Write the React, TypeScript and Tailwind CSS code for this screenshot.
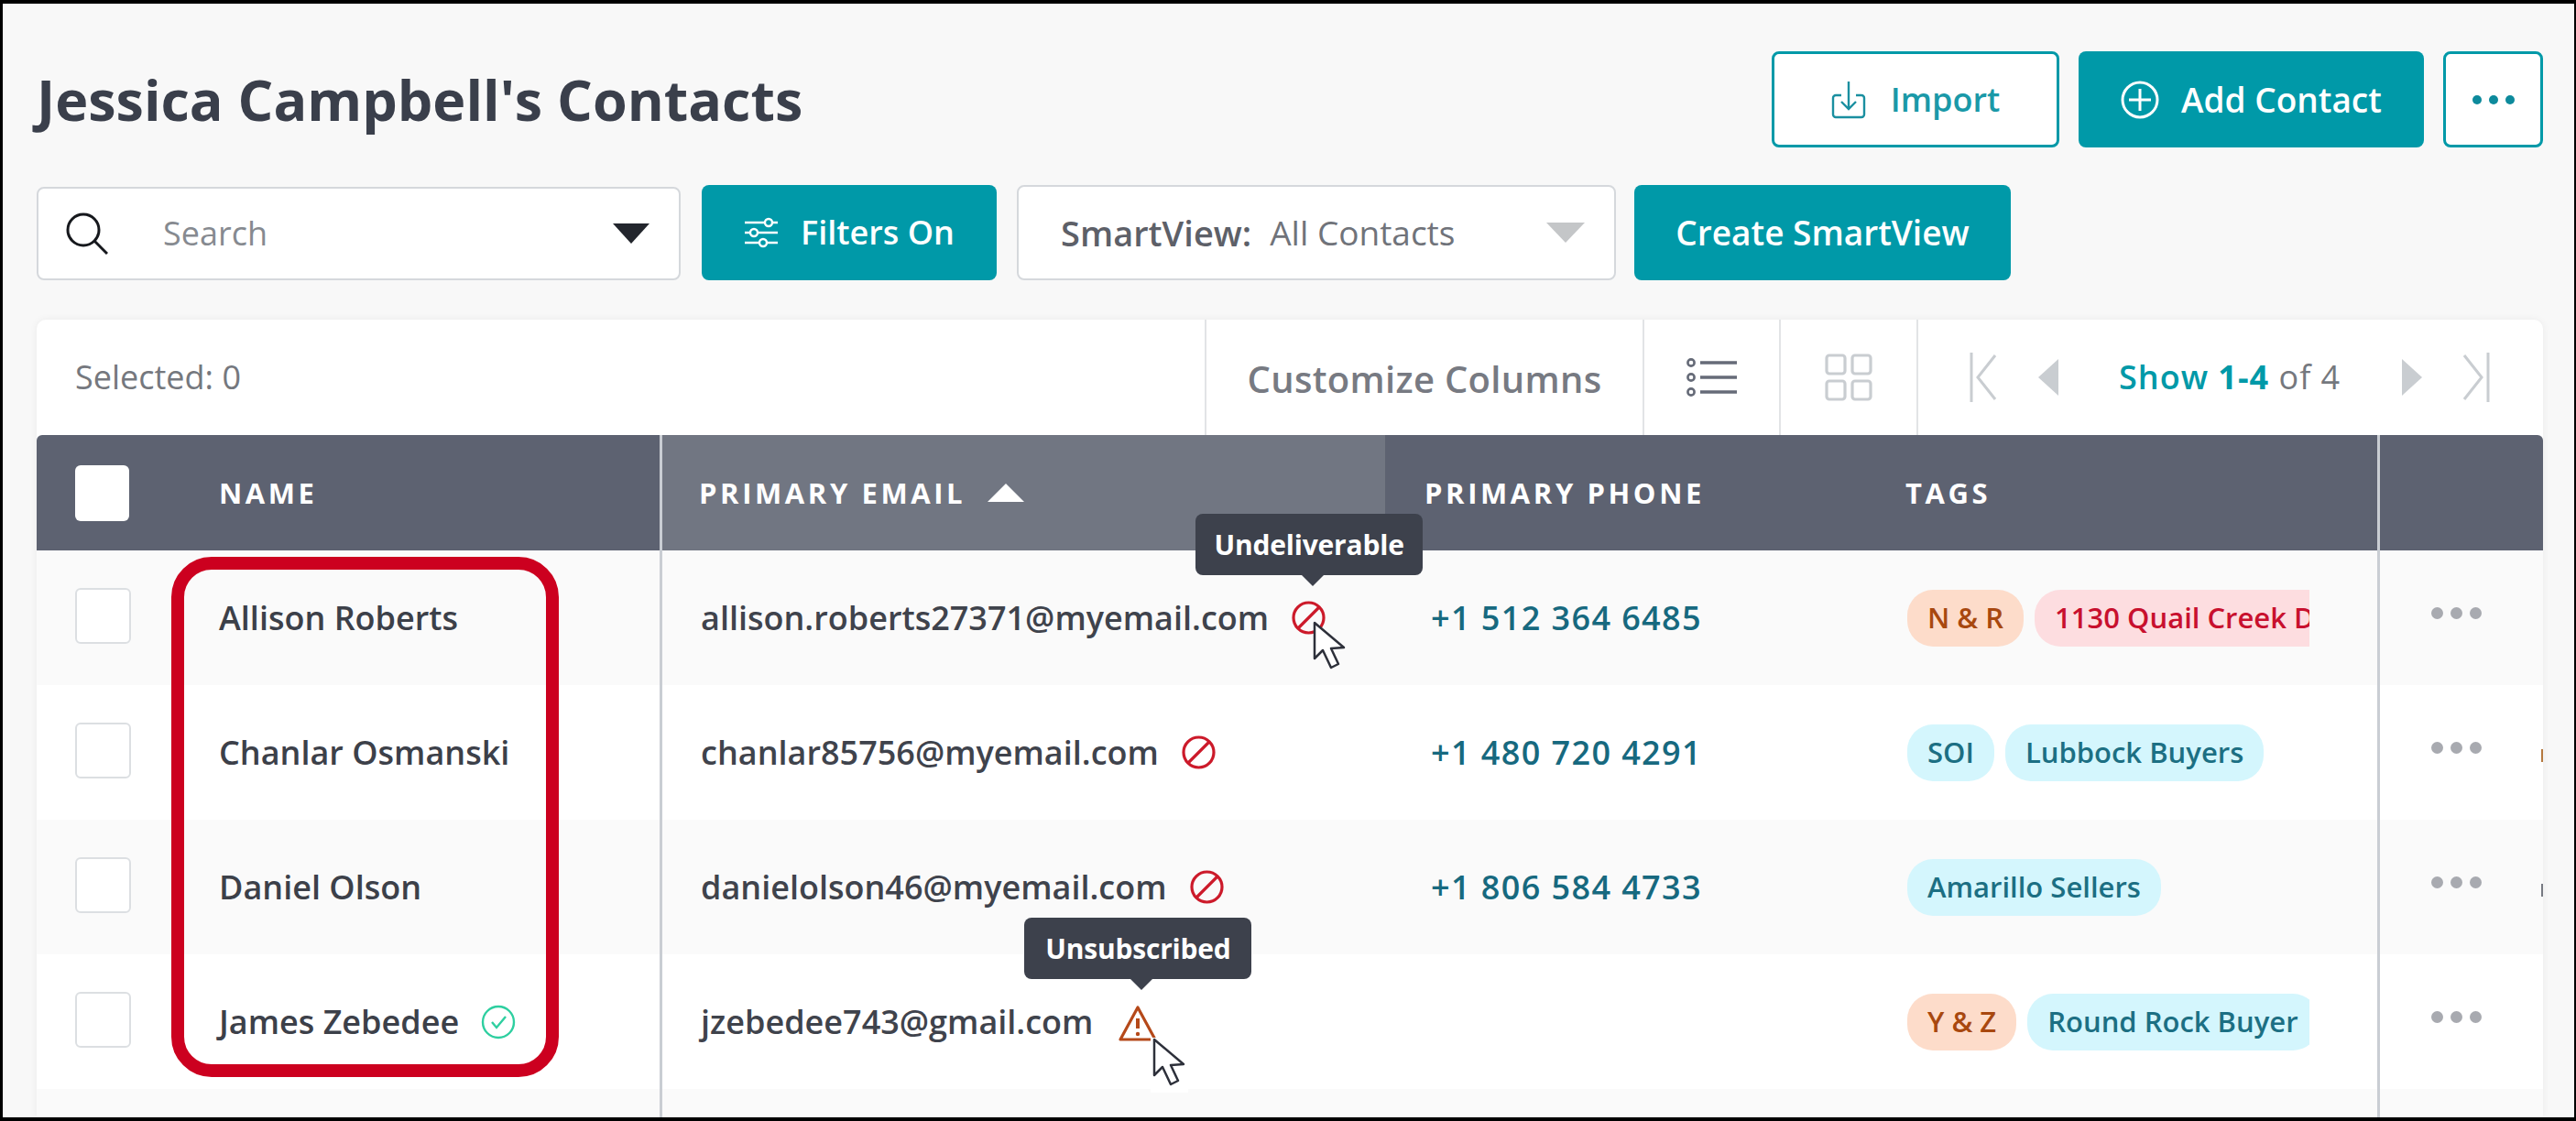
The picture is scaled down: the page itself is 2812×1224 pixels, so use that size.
import React from 'react';

const FONT = "font-['Open_Sans','Noto_Sans',sans-serif]";

const Cursor: React.FC = () => (
  <svg width="37" height="54" viewBox="0 0 37 54" className="block">
    <path
      d="M2 2 L2 41 L11 32 L20 51 L28 47 L20 30 L34 29 Z"
      fill="#fff"
      stroke="#2d303a"
      strokeWidth="2.5"
      strokeLinejoin="round"
    />
  </svg>
);

const Tooltip: React.FC<{ label: string }> = ({ label }) => (
  <div className="absolute bottom-[calc(100%+28px)] left-[-105px] w-[248px] h-[67px] rounded-[8px] bg-[#3d414c] flex items-center justify-center text-white font-bold text-[30px] tracking-[-0.2px] z-20">
    {label}
    <span className="absolute left-[116px] top-full w-0 h-0 border-x-[12px] border-x-transparent border-t-[12px] border-t-[#3d414c]" />
  </div>
);

const BlockedIcon: React.FC<{ tip?: string }> = ({ tip }) => (
  <span className="relative block w-[37px] h-[37px] shrink-0">
    <svg width="37" height="37" viewBox="0 0 37 37" className="block">
      <circle cx="18.5" cy="18.5" r="16.5" fill="none" stroke="#cc1a2a" strokeWidth="3.2" />
      <line x1="7" y1="30" x2="30" y2="7" stroke="#cc1a2a" strokeWidth="3.2" />
    </svg>
    {tip && <Tooltip label={tip} />}
    {tip && (
      <span className="absolute left-[23px] top-[22px] z-20">
        <Cursor />
      </span>
    )}
  </span>
);

const WarnIcon: React.FC<{ tip: string }> = ({ tip }) => (
  <span className="relative block w-[37px] h-[37px] ml-[5px] shrink-0">
    <svg width="44" height="41" viewBox="0 0 44 41" className="block absolute left-[-3px] top-0">
      <path d="M22 3 L41 38 L3 38 Z" fill="none" stroke="#b5491a" strokeWidth="3.2" strokeLinejoin="round" />
      <line x1="22" y1="15" x2="22" y2="26" stroke="#b5491a" strokeWidth="4" />
      <circle cx="22" cy="32" r="2.2" fill="#b5491a" />
    </svg>
    <Tooltip label={tip} />
    <span className="absolute left-[33px] top-[36px] z-20 bg-white pb-[6px] px-[2px]">
      <Cursor />
    </span>
  </span>
);

const Tag: React.FC<{ label: string; tone: 'blue' | 'orange' | 'red' }> = ({ label, tone }) => {
  const toneClass =
    tone === 'blue'
      ? 'bg-[#d4f6fd] text-[#1c6f83]'
      : tone === 'orange'
        ? 'bg-[#fddcca] text-[#a8480f]'
        : 'bg-[#fddde0] text-[#c8102e]';
  return (
    <span
      className={`h-[62px] px-[22px] rounded-[28px] flex items-center text-[31px] font-semibold whitespace-nowrap shrink-0 ${toneClass}`}
    >
      {label}
    </span>
  );
};

const Dots: React.FC<{ className: string; size: string }> = ({ className, size }) => (
  <span className="flex gap-[8px]">
    <span className={`${size} rounded-full ${className}`} />
    <span className={`${size} rounded-full ${className}`} />
    <span className={`${size} rounded-full ${className}`} />
  </span>
);

type Row = {
  name: string;
  verified?: boolean;
  email: string;
  status: React.ReactNode;
  phone?: string;
  tags: { label: string; tone: 'blue' | 'orange' | 'red' }[];
  bg: string;
  edge?: string;
};

const rows: Row[] = [
  {
    name: 'Allison Roberts',
    email: 'allison.roberts27371@myemail.com',
    status: <BlockedIcon tip="Undeliverable" />,
    phone: '+1 512 364 6485',
    tags: [
      { label: 'N & R', tone: 'orange' },
      { label: '1130 Quail Creek Drive', tone: 'red' },
    ],
    bg: 'bg-[#fafafa]',
  },
  {
    name: 'Chanlar Osmanski',
    email: 'chanlar85756@myemail.com',
    status: <BlockedIcon />,
    phone: '+1 480 720 4291',
    tags: [
      { label: 'SOI', tone: 'blue' },
      { label: 'Lubbock Buyers', tone: 'blue' },
    ],
    bg: 'bg-white',
    edge: 'bg-[#b5793f]',
  },
  {
    name: 'Daniel Olson',
    email: 'danielolson46@myemail.com',
    status: <BlockedIcon />,
    phone: '+1 806 584 4733',
    tags: [{ label: 'Amarillo Sellers', tone: 'blue' }],
    bg: 'bg-[#fafafa]',
    edge: 'bg-[#777a82]',
  },
  {
    name: 'James Zebedee',
    verified: true,
    email: 'jzebedee743@gmail.com',
    status: <WarnIcon tip="Unsubscribed" />,
    tags: [
      { label: 'Y & Z', tone: 'orange' },
      { label: 'Round Rock Buyer', tone: 'blue' },
    ],
    bg: 'bg-white',
  },
];

const COLS = 'grid grid-cols-[680px_792px_568px_515px_181px]';

export default function App() {
  return (
    <div
      className={`relative w-[2812px] h-[1224px] overflow-hidden bg-[#f8f8f8] border-black border-t-[4px] border-b-[4px] border-l-[3px] border-r-[2px] pl-[37px] pr-[34px] flex flex-col ${FONT}`}
    >
      {/* title row */}
      <div className="flex items-center justify-between pt-[52px] shrink-0">
        <h1 className="text-[61px] leading-[105px] font-bold text-[#3a3f4b]">
          Jessica Campbell's Contacts
        </h1>
        <div className="flex gap-[21px]">
          <button className="w-[314px] h-[105px] rounded-[8px] bg-white border-[3px] border-[#0099a8] flex items-center justify-center gap-[27px] text-[36px] font-semibold text-[#1a99a8]">
            <svg width="38" height="42" viewBox="0 0 38 42" fill="none" stroke="#1a8fa0" strokeWidth="2.4">
              <path d="M11 16 H5 a3 3 0 0 0 -3 3 V37 a3 3 0 0 0 3 3 H33 a3 3 0 0 0 3 -3 V19 a3 3 0 0 0 -3 -3 H27" />
              <path d="M19 1 V31 M11 23 L19 31 L27 23" />
            </svg>
            Import
          </button>
          <button className="w-[377px] h-[105px] rounded-[8px] bg-[#0099a8] flex items-center justify-center gap-[24px] text-[37px] font-semibold text-white">
            <svg width="42" height="42" viewBox="0 0 42 42" fill="none" stroke="#fff" strokeWidth="3">
              <circle cx="21" cy="21" r="19" />
              <path d="M21 9 V33 M9 21 H33" />
            </svg>
            Add Contact
          </button>
          <button className="w-[109px] h-[105px] rounded-[8px] bg-white border-[3px] border-[#0099a8] flex items-center justify-center">
            <Dots className="bg-[#0d8a9c]" size="w-[10px] h-[10px]" />
          </button>
        </div>
      </div>

      {/* filter row */}
      <div className="flex items-stretch mt-[41px] h-[104px] shrink-0">
        <div className="w-[703px] mt-[2px] rounded-[8px] bg-white border-2 border-[#d5d8dc] flex items-center pl-[30px] pr-[32px]">
          <svg width="46" height="46" viewBox="0 0 46 46" fill="none" stroke="#16181d" strokeWidth="3" className="shrink-0">
            <circle cx="19" cy="19" r="17" />
            <path d="M31 31 L45 45" />
          </svg>
          <span className="ml-[60px] flex-1 text-[36px] text-[#868a90]">Search</span>
          <span className="w-0 h-0 border-x-[20px] border-x-transparent border-t-[22px] border-t-[#23262d]" />
        </div>
        <button className="w-[322px] ml-[23px] rounded-[8px] bg-[#0099a8] flex items-center justify-center gap-[24px] text-[36px] font-semibold text-white">
          <svg width="38" height="36" viewBox="0 0 38 36" fill="none" stroke="#fff" strokeWidth="2.4">
            <path d="M1 7 H23 M31 7 H37 M1 18 H7 M15 18 H37 M1 29 H17 M25 29 H37" />
            <circle cx="27" cy="7" r="4" />
            <circle cx="11" cy="18" r="4" />
            <circle cx="21" cy="29" r="4" />
          </svg>
          Filters On
        </button>
        <div className="w-[654px] ml-[22px] rounded-[8px] bg-white border-2 border-[#d5d8dc] flex items-center pl-[46px] pr-[32px] text-[37px] whitespace-nowrap">
          <span className="font-semibold text-[#5d6068] text-[38px]">SmartView:</span>
          <span className="ml-[20px] flex-1 text-[#70737a]">All Contacts</span>
          <span className="w-0 h-0 border-x-[21px] border-x-transparent border-t-[22px] border-t-[#c4c6c8]" />
        </div>
        <button className="w-[411px] ml-[20px] rounded-[8px] bg-[#0099a8] flex items-center justify-center text-[37px] font-semibold text-white">
          Create SmartView
        </button>
      </div>

      {/* card */}
      <div className="relative mt-[43px] flex-1 rounded-t-[10px] bg-white shadow-[0_0_8px_rgba(0,0,0,0.06)]">
        <div className="flex h-[126px] items-stretch">
          <div className="w-[1275px] pl-[42px] flex items-center text-[36px] text-[#75787e]">Selected: 0</div>
          <div className="w-[478px] border-l-2 border-[#e2e4e6] flex items-center justify-center pt-[4px] text-[40px] font-semibold tracking-[0.3px] text-[#777a82] whitespace-nowrap">
            Customize Columns
          </div>
          <div className="w-[149px] border-l-2 border-[#e2e4e6] flex items-center justify-center">
            <svg width="56" height="44" viewBox="0 0 56 44" fill="none" stroke="#666b78" strokeWidth="2.6">
              <circle cx="5" cy="6" r="3.6" />
              <circle cx="5" cy="22" r="3.6" />
              <circle cx="5" cy="38" r="3.6" />
              <path strokeWidth="3.6" d="M15 6 H55 M15 22 H55 M15 38 H55" />
            </svg>
          </div>
          <div className="w-[150px] border-l-2 border-[#e2e4e6] flex items-center justify-center">
            <svg width="52" height="52" viewBox="0 0 52 52" fill="none" stroke="#c9cdd1" strokeWidth="3.2">
              <rect x="2" y="2" width="20" height="20" rx="3" />
              <rect x="30" y="2" width="20" height="20" rx="3" />
              <rect x="2" y="30" width="20" height="20" rx="3" />
              <rect x="30" y="30" width="20" height="20" rx="3" />
            </svg>
          </div>
          <div className="flex-1 border-l-2 border-[#e2e4e6] flex items-center pl-[56px]">
            <svg width="30" height="54" viewBox="0 0 30 54" fill="none" stroke="#c9cdd1" strokeWidth="3">
              <path d="M2 0 V54 M28 3 L9 27 L28 51" />
            </svg>
            <svg width="22" height="40" viewBox="0 0 22 40" fill="#c9cdd1" className="ml-[45px]">
              <path d="M22 0 V40 L0 20 Z" />
            </svg>
            <span className="ml-[66px] w-[309px] text-[36px] tracking-[1px] text-[#75787e] whitespace-nowrap">
              <span className="text-[#0099a8] font-semibold">
                Show <span className="font-bold">1-4</span>
              </span>{' '}
              of 4
            </span>
            <svg width="22" height="40" viewBox="0 0 22 40" fill="#c9cdd1">
              <path d="M0 0 V40 L22 20 Z" />
            </svg>
            <svg width="30" height="54" viewBox="0 0 30 54" fill="none" stroke="#c9cdd1" strokeWidth="3" className="ml-[44px]">
              <path d="M28 0 V54 M2 3 L21 27 L2 51" />
            </svg>
          </div>
        </div>

        {/* table header */}
        <div className={`${COLS} h-[126px] bg-[#5d6271] rounded-t-[6px] text-white text-[31px] font-bold tracking-[3.6px] whitespace-nowrap`}>
          <div className="flex items-center pl-[42px]">
            <span className="w-[59px] h-[61px] rounded-[6px] bg-white" />
            <span className="ml-[98px]">NAME</span>
          </div>
          <div className="border-l-[3px] border-[#c9cdd3] bg-[#717682] pl-[40px] flex items-center gap-[24px]">
            PRIMARY EMAIL
            <span className="w-0 h-0 border-x-[20px] border-x-transparent border-b-[20px] border-b-white" />
          </div>
          <div className="pl-[43px] flex items-center">PRIMARY PHONE</div>
          <div className="flex items-center">TAGS</div>
          <div className="border-l-[3px] border-[#c9cdd3]" />
        </div>

        {/* table body */}
        <div className="relative">
          {rows.map((r) => (
            <div key={r.name} className={`${COLS} h-[147px] items-stretch ${r.bg}`}>
              <div className="flex items-center pl-[42px]">
                <span className="w-[61px] h-[61px] mb-[4px] rounded-[6px] bg-white border-2 border-[#dcdfe2] shrink-0" />
                <span className="ml-[96px] text-[36px] font-semibold text-[#3c4049] whitespace-nowrap">{r.name}</span>
                {r.verified && (
                  <svg width="38" height="38" viewBox="0 0 38 38" fill="none" stroke="#2ecfa0" strokeWidth="2.4" className="ml-[24px]">
                    <circle cx="19" cy="19" r="17" />
                    <path d="M12 19 L17 25 L27 13" />
                  </svg>
                )}
              </div>
              <div className="border-l-[3px] border-[#c9cdd3] pl-[42px] flex items-center gap-[25px] text-[36px] font-semibold text-[#3f434c]">
                <span className="whitespace-nowrap">{r.email}</span>
                {r.status}
              </div>
              <div className="pl-[50px] flex items-center text-[36px] tracking-[1.4px] font-semibold text-[#17697f]">{r.phone}</div>
              <div className="flex items-center pl-[2px] gap-[12px] overflow-hidden mr-[74px]">
                {r.tags.map((t) => (
                  <Tag key={t.label} label={t.label} tone={t.tone} />
                ))}
              </div>
              <div className="relative border-l-[3px] border-[#c9cdd3] pl-[56px] flex items-center">
                <span className="mb-[10px]">
                  <Dots className="bg-[#a8aab0]" size="w-[13px] h-[13px]" />
                </span>
                {r.edge && <span className={`absolute right-0 top-[70px] w-[2px] h-[14px] ${r.edge}`} />}
              </div>
            </div>
          ))}
          <div className="h-[31px] bg-[#fafafa] grid grid-cols-[680px_792px_568px_515px_181px]">
            <div />
            <div className="border-l-[3px] border-[#c9cdd3]" />
            <div />
            <div />
            <div className="border-l-[3px] border-[#c9cdd3]" />
          </div>

          {/* highlight around the names */}
          <div className="absolute left-[147px] top-[7px] w-[423px] h-[568px] rounded-[44px] border-[14px] border-[#cc001f] pointer-events-none" />
        </div>
      </div>
    </div>
  );
}
